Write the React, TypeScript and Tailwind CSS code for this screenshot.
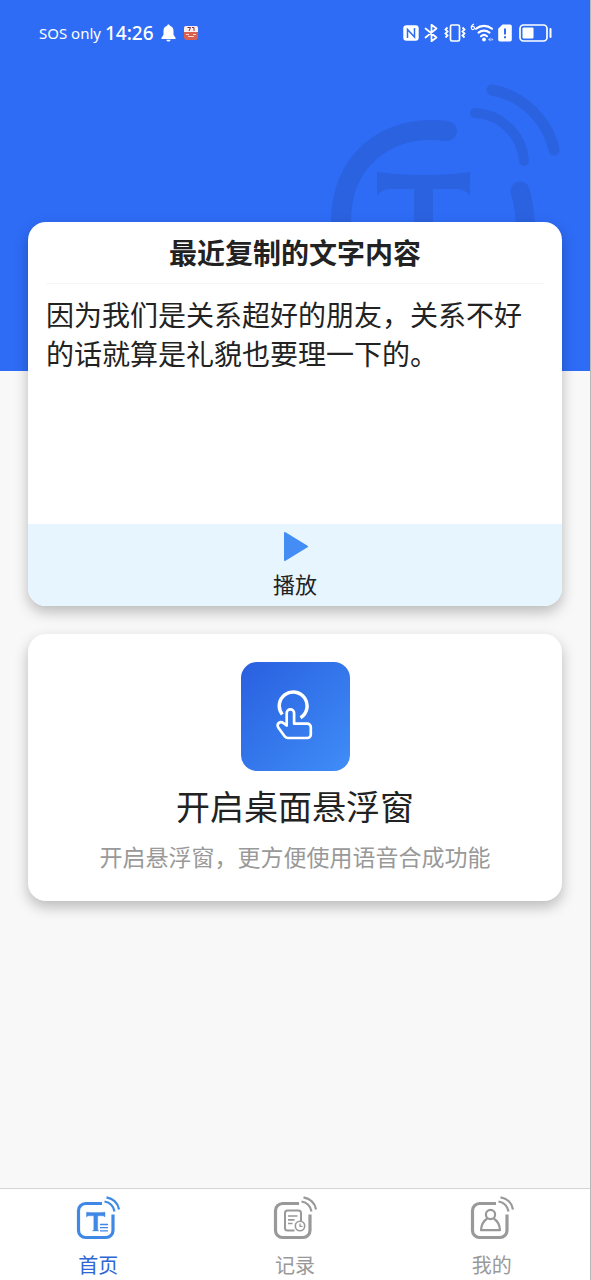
import { useState } from "react";
import type { ReactNode } from "react";

type TabKey = "home" | "records" | "mine";

const StatusBar = () => (
  <div className="flex items-center justify-between pt-[19px] pr-[38px] pl-[39px] text-white">
    <div className="flex h-[28px] items-center">
      <span className="mr-[4px] font-['Noto_Sans',sans-serif] text-[15px]">SOS only</span>
      <span className="mr-[7px] font-['Noto_Sans',sans-serif] text-[19px] font-medium">14:26</span>
      <svg className="mr-[8px] h-[18px] w-[15px]" viewBox="0 0 15 18" fill="#fff">
        <path d="M7.5 0.5c.8 0 1.3.5 1.3 1.2 2.4.6 3.7 2.5 3.7 5v4.1l2 3V15H.5v-1.2l2-3V6.7c0-2.5 1.3-4.4 3.7-5 0-.7.5-1.2 1.3-1.2z" />
        <path d="M5.3 15.7h4.4c-.2 1.1-1.1 1.8-2.2 1.8s-2-.7-2.2-1.8z" />
      </svg>
      <svg className="h-[14px] w-[14px]" viewBox="0 0 14 14">
        <rect width="14" height="14" rx="3" fill="#d9604f" />
        <path d="M2 0h10a2 2 0 0 1 2 2v4H0V2a2 2 0 0 1 2-2z" fill="#fbeeee" />
        <path d="M3.5 1.5h3L5 5M8 1.5h2V5" stroke="#7a3038" fill="none" />
        <path d="M2 8.5h3M9 8.5h3M4 10.5h6" stroke="#f7d9cf" fill="none" />
      </svg>
    </div>
    <div className="flex h-[28px] items-center">
      <svg className="mr-[5px] h-[16px] w-[16px]" viewBox="0 0 16 16" fill="none">
        <rect x="0.3" y="0.3" width="15.4" height="15.4" rx="3" fill="#fff" />
        <path d="M4.5 13V4.500l7 7.500V3" stroke="#2e6cf6" strokeWidth="1.500" />
      </svg>
      <svg className="mr-[5px] h-[18px] w-[15px]" viewBox="0 0 15 18" fill="none">
        <path d="M1.5 4.5l11 9L7.5 17.2V.8l5 3.7-11 9" stroke="#fff" strokeWidth="1.7" strokeLinejoin="round" strokeLinecap="round" />
      </svg>
      <svg className="mr-[4px] h-[18px] w-[22px]" viewBox="0 0 22 18" fill="none" stroke="#fff">
        <rect x="6.5" y="1" width="9" height="16" rx="1.5" strokeWidth="1.7" />
        <path d="M3.5 3.5l-2 2 2 2-2 2 2 2-2 2M18.5 3.5l2 2-2 2 2 2-2 2 2 2" strokeWidth="1.8" />
      </svg>
      <svg className="mr-[4px] h-[20px] w-[24px]" viewBox="0 0 24 20" fill="none">
        <path d="M4 1C2.3 1.6 1.2 3 1.2 4.8M2.9 3.4a1.6 1.6 0 1 1 0 3.2 1.6 1.6 0 0 1 0-3.2z" stroke="#fff" strokeWidth="1.1" />
        <path d="M6 5.8a12.5 12.5 0 0 1 16 0M8.5 9.6a8.5 8.5 0 0 1 11 0M11 13.2a4.6 4.6 0 0 1 6 0" stroke="#fff" strokeWidth="2.1" strokeLinecap="round" />
        <circle cx="14" cy="16.5" r="1.9" fill="#fff" />
        <path d="M18 16.5l2.5-2v4zM21.5 15l2 1.5-2 1.5z" fill="#bcd0fc" />
      </svg>
      <svg className="mr-[7px] h-[18px] w-[14px]" viewBox="0 0 14 18">
        <path d="M4.5.5h7.5a1.8 1.8 0 0 1 1.8 1.8v13.4a1.8 1.8 0 0 1-1.8 1.8H2A1.8 1.8 0 0 1 .2 15.7V4.8z" fill="#fff" />
        <path d="M7 4.5v6M7 12.3v2" stroke="#2e6cf6" strokeWidth="2" />
      </svg>
      <svg className="h-[18px] w-[33px]" viewBox="0 0 33 18" fill="none">
        <rect x="1" y="1" width="27" height="16" rx="3.5" stroke="#fff" strokeWidth="1.7" />
        <rect x="3.5" y="3.5" width="11" height="11" rx="1" fill="#fff" />
        <path d="M31.5 5v8" stroke="#fff" strokeWidth="2" strokeLinecap="round" />
      </svg>
    </div>
  </div>
);

const Watermark = () => (
  <svg
    className="absolute top-[75px] right-0 h-[160px] w-[271px]"
    viewBox="0 0 271 160"
    fill="none"
    stroke="#2b62e0"
    strokeLinecap="round"
  >
    <path d="M128 56C65 48 22 88 22 146v24" strokeWidth="20" />
    <path d="M201 116c4 12 6 26 6 50" strokeWidth="19" />
    <path d="M156 38c26 1 47 22 49 48" strokeWidth="10" />
    <path d="M173 15c30 5 56 30 62 60" strokeWidth="11" />
    <path
      d="M58 97c14 2 30 3 47 3s32-1 46-3v24c-3-4-7-7-13-7h-24v60H95v-60H71c-6 0-10 3-13 7z"
      fill="#2b62e0"
      stroke="none"
    />
  </svg>
);

const TouchIcon = () => (
  <svg className="h-[50px] w-[38px]" viewBox="0 0 38 50" fill="none" stroke="#fff" strokeLinejoin="round">
    <path d="M6.3 24.5A13.9 13.9 0 1 1 24.5 27.7" strokeWidth="3.5" />
    <path
      d="M10.7 35.5V23a3.7 3.7 0 0 1 7.4 0v10.7h13.2a3.5 3.5 0 0 1 3.5 3.5v7.3a3.5 3.5 0 0 1-3.5 3.5H12a4 4 0 0 1-3-1.3L2.8 38.3c-1.5-1.8-1.6-4-.2-5.2 1.5-1.2 3.3-1.1 4.7-.1z"
      strokeWidth="2.7"
    />
  </svg>
);

// Rounded frame with the two sound waves, shared by all tab icons
const TabFrame = ({ children }: { children: ReactNode }) => (
  <svg className="h-[44px] w-[44px]" viewBox="0 0 44 44" fill="none" stroke="currentColor" aria-hidden="true">
    <path d="M26 7.5H9.5a7 7 0 0 0-7 7V34.5a7 7 0 0 0 7 7H30a7 7 0 0 0 7-7V18.5" strokeWidth="3.2" />
    <path d="M28.5 5.5C34 6.5 37.5 10 38.5 15.5" strokeWidth="2.2" />
    <path d="M30.5 1.3C37 2.5 42 7 43 13.5" strokeWidth="2.2" />
    {children}
  </svg>
);

const tabs: { key: TabKey; label: string; icon: ReactNode }[] = [
  {
    key: "home",
    label: "首页",
    icon: (
      <>
        <path
          d="M10.5 16.2c3 .3 6 .4 9.2.4s6.2-.1 9.3-.4v4.8c-.8-.9-1.5-1.2-2.8-1.2H21.7v13.4c0 1 .4 1.4 1.2 1.7H16.3c1-.3 1.5-.7 1.5-1.7V19.8h-4.5c-1.2 0-2 .3-2.8 1.2z"
          fill="currentColor"
          stroke="currentColor"
          strokeWidth="0.4"
        />
        <path d="M24 28.5h8M24 31.7h8M24 34.9h8" strokeWidth="1.3" />
      </>
    ),
  },
  {
    key: "records",
    label: "记录",
    icon: (
      <>
        <path d="M21.5 34.5h-7a2.5 2.5 0 0 1-2.5-2.5V17a2.5 2.5 0 0 1 2.5-2.5h11A2.5 2.5 0 0 1 28 17v8" strokeWidth="2" />
        <path d="M15 20h9.5M15 23.8h6.5M15 27.5h4.5" strokeWidth="1.7" />
        <circle cx="27" cy="30" r="4.7" strokeWidth="1.6" />
        <path d="M27 27.5v2.8h2.5" strokeWidth="1.3" />
      </>
    ),
  },
  {
    key: "mine",
    label: "我的",
    icon: (
      <>
        <circle cx="20.5" cy="18.5" r="4.6" strokeWidth="2.2" />
        <path d="M17.3 22.5c-4 2.5-6 7-6.3 11.7h19c-.3-4.7-2.3-9.2-6.3-11.7" strokeWidth="2.2" strokeLinejoin="round" />
      </>
    ),
  },
];

export default function App() {
  const [activeTab, setActiveTab] = useState<TabKey>("home");
  const [playing, setPlaying] = useState(false);

  return (
    <div className="flex min-h-screen flex-col border-r border-[#b8b8b8] bg-[#f8f8f8] font-['Lato','Noto_Sans_CJK_SC',sans-serif] text-[#222222]">
      {/* Header */}
      <header className="relative h-[371px] shrink-0 overflow-hidden bg-[#2e6cf6]">
        <StatusBar />
        <Watermark />
      </header>

      <main className="relative -mt-[149px] flex grow flex-col gap-[28px] px-[28px] pb-[28px]">
        {/* Recently copied text */}
        <section className="overflow-hidden rounded-[18px] bg-white shadow-[0_6px_14px_rgba(0,0,0,0.25)]">
          <div className="px-[18px]">
            <h1 className="border-b border-[#f6f6f6] pt-[11px] pb-[10px] text-center text-[28px] leading-[40px] font-bold">
              最近复制的文字内容
            </h1>
            <p className="min-h-[240px] pt-[12px] text-[28px] leading-[39px]">
              因为我们是关系超好的朋友，关系不好的话就算是礼貌也要理一下的。
            </p>
          </div>
          <button
            onClick={() => setPlaying(!playing)}
            aria-pressed={playing}
            className="flex w-full flex-col items-center bg-[#e7f5fe] pt-[6px] pb-[2px]"
          >
            <svg className="h-[32px] w-[26px]" viewBox="0 0 26 32" aria-hidden="true">
              <path d="M3 3L25 16.5 3 30z" fill="#448df5" stroke="#448df5" strokeWidth="2" strokeLinejoin="round" />
            </svg>
            <span className="mt-[3px] text-[22px] leading-[39px]">播放</span>
          </button>
        </section>

        {/* Floating window */}
        <button className="flex flex-col items-center rounded-[18px] bg-white pt-[28px] pb-[26px] shadow-[0_6px_14px_rgba(0,0,0,0.25)]">
          <span className="flex h-[109px] w-[109px] items-center justify-center rounded-[16px] bg-linear-to-br from-[#2a5fdf] to-[#408df8] pb-[4px]">
            <TouchIcon />
          </span>
          <span className="mt-[12px] text-[34px] leading-[48px]">开启桌面悬浮窗</span>
          <span className="mt-[8px] text-[23px] leading-[36px] text-[#999999]">
            开启悬浮窗，更方便使用语音合成功能
          </span>
        </button>
      </main>

      {/* Tab bar */}
      <nav className="grid grid-cols-3 border-t border-[#d4d4d4] bg-white">
        {tabs.map((tab) => (
          <button
            key={tab.key}
            onClick={() => setActiveTab(tab.key)}
            className={`flex flex-col items-center pt-[7px] ${
              activeTab === tab.key ? "text-[#4088e6]" : "text-[#999999]"
            }`}
          >
            <TabFrame>{tab.icon}</TabFrame>
            <span
              className={`mt-[11px] text-[20px] leading-[29px] ${
                activeTab === tab.key ? "text-[#2d66d6]" : ""
              }`}
            >
              {tab.label}
            </span>
          </button>
        ))}
      </nav>
    </div>
  );
}
